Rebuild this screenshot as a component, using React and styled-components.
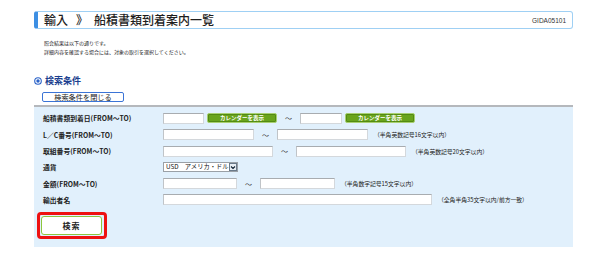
import React from "react";
import styled, { createGlobalStyle } from "styled-components";

const GlobalStyle = createGlobalStyle`
  body {
    margin: 0;
    background: #fff;
    font-family: "Noto Sans CJK JP", "Liberation Sans", sans-serif;
    color: #222;
  }
`;

const rows = [
  { label: "船積書類到着日(FROM～TO)", kind: "date" },
  { label: "L／C番号(FROM～TO)", kind: "range", w1: 91, w2: 91, note: "（半角英数記号16文字以内）" },
  { label: "取組番号(FROM～TO)", kind: "range", w1: 110, w2: 110, note: "（半角英数記号20文字以内）" },
  { label: "通貨", kind: "select" },
  { label: "金額(FROM～TO)", kind: "range", w1: 74, w2: 75, note: "（半角数字記号15文字以内）" },
  { label: "輸出者名", kind: "single", w1: 269, note: "（全角半角35文字以内/前方一致）" },
];

export default function App() {
  return (
    <Page>
      <GlobalStyle />
      <TitleBar>
        <Title>
          輸入<Sep>》</Sep>船積書類到着案内一覧
        </Title>
        <ScreenId>GIDA05101</ScreenId>
      </TitleBar>
      <Intro>
        <p>照会結果は以下の通りです。</p>
        <p>詳細内容を確認する場合には、対象の取引を選択してください。</p>
      </Intro>
      <Heading>
        <svg width="8" height="8" viewBox="0 0 8 8">
          <circle cx="4" cy="4" r="3.3" fill="#fff" stroke="#2a62c8" strokeWidth="1.1" />
          <circle cx="4" cy="4" r="1.7" fill="#2a62c8" />
        </svg>
        検索条件
      </Heading>
      <CloseButton>検索条件を閉じる</CloseButton>
      <Panel>
        {rows.map((r, i) => (
          <Row key={i}>
            <Label>{r.label}</Label>
            <Fields>
              {r.kind === "date" && (
                <>
                  <Input $w={41} />
                  <CalButton>カレンダーを表示</CalButton>
                  <Tilde>～</Tilde>
                  <Input $w={42} />
                  <CalButton>カレンダーを表示</CalButton>
                </>
              )}
              {r.kind === "range" && (
                <>
                  <Input $w={r.w1} />
                  <Tilde>～</Tilde>
                  <Input $w={r.w2} />
                  <Note>{r.note}</Note>
                </>
              )}
              {r.kind === "single" && (
                <>
                  <Input $w={r.w1} />
                  <Note>{r.note}</Note>
                </>
              )}
              {r.kind === "select" && (
                <Select>
                  <SelectText>USD　アメリカ・ドル</SelectText>
                  <Arrow>
                    <svg width="6" height="5" viewBox="0 0 6 5">
                      <path d="M1 1.5 L3 3.5 L5 1.5" fill="none" stroke="#123" strokeWidth="1.1" />
                    </svg>
                  </Arrow>
                </Select>
              )}
            </Fields>
          </Row>
        ))}
        <SearchOutline>
          <SearchButton>検索</SearchButton>
        </SearchOutline>
      </Panel>
    </Page>
  );
}

const Page = styled.div`
  width: 539px;
  padding: 11px 0 0 34px;
`;

const TitleBar = styled.div`
  box-sizing: border-box;
  height: 18px;
  display: flex;
  align-items: center;
  justify-content: space-between;
  border: 1px solid #9fd0f4;
  border-left: 4px solid #3d8fe3;
  border-radius: 3px;
  padding: 0 6px 0 6px;
`;

const Title = styled.div`
  font-size: 12px;
  font-weight: 500;
  color: #1e1e1e;
  line-height: 16px;
`;

const Sep = styled.span`
  margin: 0 6px 0 8px;
`;

const ScreenId = styled.div`
  font-family: "Liberation Sans", sans-serif;
  font-size: 6.5px;
  color: #333;
`;

const Intro = styled.div`
  margin-top: 8.5px;
  padding-left: 10px;
  p {
    margin: 0;
    font-size: 5px;
    line-height: 9px;
    color: #222;
  }
`;

const Heading = styled.div`
  margin-top: 20.5px;
  height: 10px;
  display: flex;
  align-items: center;
  gap: 3px;
  font-size: 9px;
  font-weight: bold;
  color: #1c3f8f;
  line-height: 10px;
`;

const CloseButton = styled.div`
  box-sizing: border-box;
  margin: 6px 0 0 8px;
  width: 82px;
  height: 10px;
  border: 1px solid #3b74d6;
  border-radius: 2px;
  background: #fff;
  font-size: 7.2px;
  line-height: 8px;
  text-align: center;
  color: #222;
`;

const Panel = styled.div`
  margin-top: 3px;
  background: #e1f0fc;
  border-top: 2px solid #b5b8bc;
  padding: 3.3px 0 8px 9px;
`;

const Row = styled.div`
  display: grid;
  grid-template-columns: 120px 1fr;
  align-items: center;
  height: 16.3px;
`;

const Label = styled.div`
  font-size: 6.8px;
  font-weight: bold;
  color: #222;
  white-space: nowrap;
`;

const Fields = styled.div`
  display: flex;
  align-items: center;
`;

const Input = styled.div`
  box-sizing: border-box;
  width: ${(p) => p.$w}px;
  height: 11px;
  background: #fff;
  border: 1px solid #d4d8dc;
  border-top-color: #a8acb0;
  border-left-color: #c0c4c8;
`;

const CalButton = styled.div`
  box-sizing: border-box;
  width: 70px;
  height: 10px;
  margin-left: 3px;
  background: #69a41c;
  border: 1px solid #a8d070;
  box-shadow: inset 0 0 0 1px #538b12;
  border-radius: 2px;
  color: #fff;
  font-size: 5.5px;
  font-weight: bold;
  line-height: 8px;
  text-align: center;
  white-space: nowrap;
`;

const Tilde = styled.div`
  width: 23px;
  text-align: center;
  font-size: 7px;
  color: #333;
`;

const Note = styled.div`
  margin-left: 6px;
  font-size: 5.8px;
  color: #222;
  white-space: nowrap;
`;

const Select = styled.div`
  box-sizing: border-box;
  width: 75px;
  height: 10px;
  display: flex;
  align-items: center;
  justify-content: space-between;
  background: #fff;
  border: 1px solid #9aa0a6;
  padding-left: 2px;
`;

const SelectText = styled.span`
  font-size: 6.3px;
  line-height: 8px;
  color: #111;
  white-space: nowrap;
  overflow: hidden;
`;

const Arrow = styled.div`
  box-sizing: border-box;
  flex: none;
  width: 8px;
  height: 8px;
  display: flex;
  align-items: center;
  justify-content: center;
  border: 1px solid #6a7a8a;
  background: #e8eef4;
`;

const SearchOutline = styled.div`
  box-sizing: border-box;
  margin: 4px 0 0 -6px;
  width: 70px;
  height: 27px;
  border: 3px solid #ee1111;
  border-radius: 4px;
  padding: 1px 2px 1px 1px;
`;

const SearchButton = styled.div`
  box-sizing: border-box;
  width: 61px;
  height: 19px;
  border: 1.5px solid #8cc63e;
  border-radius: 3px;
  background: #fff;
  font-size: 8px;
  font-weight: bold;
  color: #222;
  display: flex;
  align-items: center;
  justify-content: center;
  letter-spacing: 1px;
`;
